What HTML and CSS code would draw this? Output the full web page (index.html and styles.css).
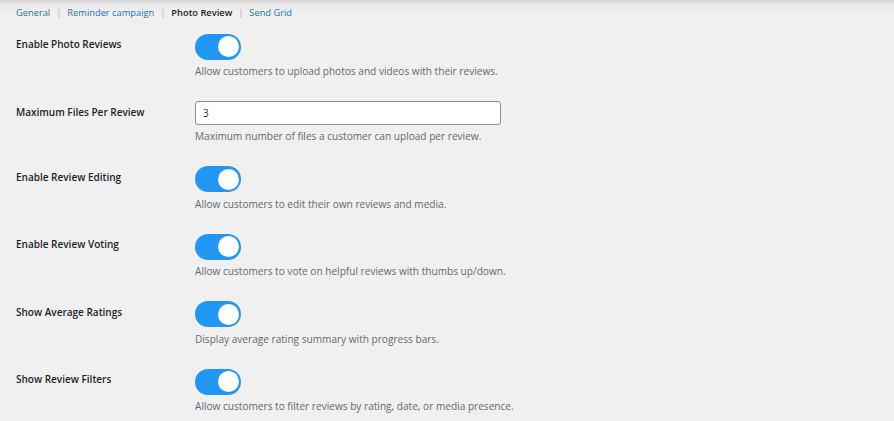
FILE: index.html
```html
<!DOCTYPE html>
<html lang="en">
<head>
<meta charset="utf-8">
<title>Photo Review Settings</title>
<link rel="stylesheet" href="styles.css">
</head>
<body>
<nav class="tabs">
  <a href="#" class="tab">General</a><span class="sep">|</span>
  <a href="#" class="tab">Reminder campaign</a><span class="sep">|</span>
  <span class="tab current">Photo Review</span><span class="sep">|</span>
  <a href="#" class="tab">Send Grid</a>
</nav>
<div class="form">
  <div class="row">
    <div class="label">Enable Photo Reviews</div>
    <div class="field">
      <span class="toggle"><span class="knob"></span></span>
      <p class="desc">Allow customers to upload photos and videos with their reviews.</p>
    </div>
  </div>
  <div class="row">
    <div class="label">Maximum Files Per Review</div>
    <div class="field">
      <input class="num" type="text" value="3">
      <p class="desc desc-input">Maximum number of files a customer can upload per review.</p>
    </div>
  </div>
  <div class="row">
    <div class="label">Enable Review Editing</div>
    <div class="field">
      <span class="toggle"><span class="knob"></span></span>
      <p class="desc">Allow customers to edit their own reviews and media.</p>
    </div>
  </div>
  <div class="row">
    <div class="label">Enable Review Voting</div>
    <div class="field">
      <span class="toggle"><span class="knob"></span></span>
      <p class="desc">Allow customers to vote on helpful reviews with thumbs up/down.</p>
    </div>
  </div>
  <div class="row">
    <div class="label">Show Average Ratings</div>
    <div class="field">
      <span class="toggle"><span class="knob"></span></span>
      <p class="desc">Display average rating summary with progress bars.</p>
    </div>
  </div>
  <div class="row">
    <div class="label">Show Review Filters</div>
    <div class="field">
      <span class="toggle"><span class="knob"></span></span>
      <p class="desc">Allow customers to filter reviews by rating, date, or media presence.</p>
    </div>
  </div>
</div>
</body>
</html>
```
FILE: styles.css
```css
html, body {
  margin: 0;
  padding: 0;
}
body {
  background: #f0f0f1 linear-gradient(#d4d4d5 0, #e6e6e7 4px, #ececed 8px, #f0f0f1 12px) no-repeat;
  background-size: 100% 14px;
  font-family: "Open Sans", "Noto Sans", sans-serif;
  font-size: 10px;
  color: #1d2327;
  height: 421px;
  overflow: hidden;
}
.tabs {
  display: flex;
  align-items: center;
  padding: 4px 16px 0;
  line-height: 17px;
  font-size: 9.3px;
}
.tab {
  color: #2271b1;
  text-decoration: none;
}
.tab.current {
  color: #1d2327;
  font-weight: 600;
}
.sep {
  color: #a7aaad;
  margin: 0 6px;
}
.form {
  margin-top: 2px;
  padding-left: 16px;
}
.row {
  display: grid;
  grid-template-columns: 179px 1fr;
  padding: 10.5px 0;
}
.label {
  font-weight: 600;
  line-height: 17px;
  padding-top: 2.5px;
  color: #1d2327;
}
.field {
  display: flex;
  flex-direction: column;
  align-items: flex-start;
}
.toggle {
  display: flex;
  justify-content: flex-end;
  align-items: center;
  box-sizing: border-box;
  width: 46px;
  height: 26px;
  padding: 0 2.5px;
  border-radius: 13px;
  background: #2196f3;
}
.knob {
  width: 21px;
  height: 21px;
  border-radius: 50%;
  background: #fff;
}
.desc {
  margin: 3.5px 0 0;
  line-height: 17px;
  font-size: 10.1px;
  color: #646970;
}
.desc-input {
  margin-top: 3px;
}
.num {
  box-sizing: border-box;
  width: 306px;
  height: 24px;
  margin: 0;
  padding: 0 7px;
  border: 1px solid #8c8f94;
  border-radius: 3px;
  background: #fff;
  font-family: inherit;
  font-size: 10px;
  color: #2c3338;
  outline: none;
}
```
